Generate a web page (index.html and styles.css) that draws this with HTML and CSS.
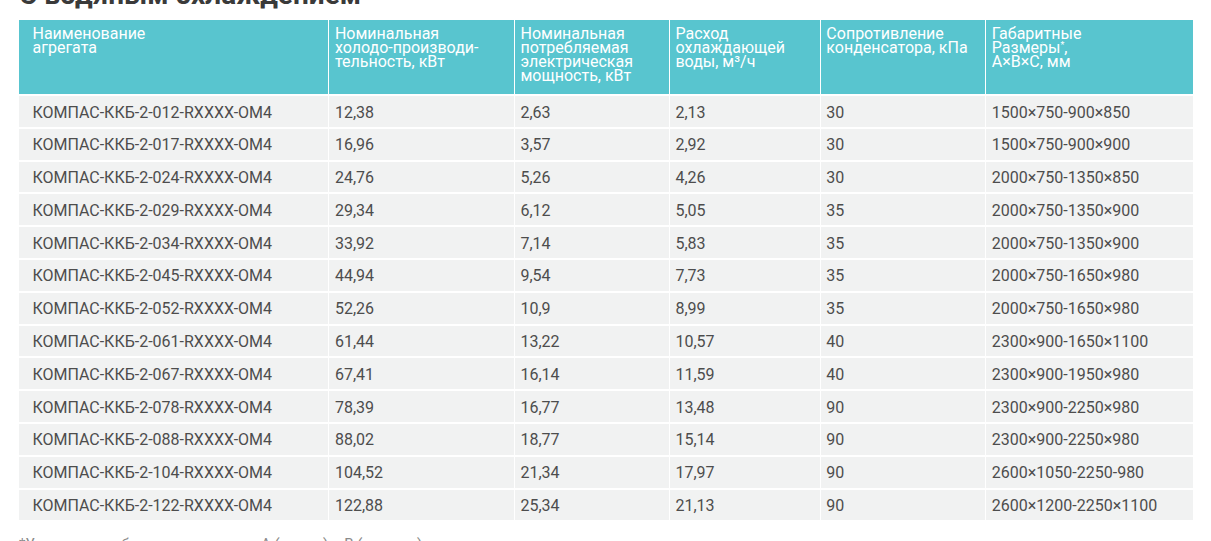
FILE: index.html
```html
<!DOCTYPE html>
<html lang="ru">
<head>
<meta charset="utf-8">
<title>С водяным охлаждением</title>
<link rel="stylesheet" href="styles.css">
</head>
<body>
<div class="page">
  <h2 class="title">С водяным охлаждением</h2>
  <table class="spec">
    <colgroup>
      <col class="c1"><col class="c2"><col class="c3"><col class="c4"><col class="c5"><col class="c6">
    </colgroup>
    <thead>
      <tr>
        <th class="first">Наименование<br>агрегата</th>
        <th>Номинальная<br>холодо-производи-<br>тельность, кВт</th>
        <th>Номинальная<br>потребляемая<br>электрическая<br>мощность, кВт</th>
        <th>Расход<br>охлаждающей<br>воды, м³/ч</th>
        <th>Сопротивление<br>конденсатора, кПа</th>
        <th>Габаритные<br>Размеры<sup>*</sup>,<br>A×B×C, мм</th>
      </tr>
    </thead>
    <tbody>
      <tr><td class="first">КОМПАС-ККБ-2-012-RXXXX-OM4</td><td>12,38</td><td>2,63</td><td>2,13</td><td>30</td><td>1500×750-900×850</td></tr>
      <tr><td class="first">КОМПАС-ККБ-2-017-RXXXX-OM4</td><td>16,96</td><td>3,57</td><td>2,92</td><td>30</td><td>1500×750-900×900</td></tr>
      <tr><td class="first">КОМПАС-ККБ-2-024-RXXXX-OM4</td><td>24,76</td><td>5,26</td><td>4,26</td><td>30</td><td>2000×750-1350×850</td></tr>
      <tr><td class="first">КОМПАС-ККБ-2-029-RXXXX-OM4</td><td>29,34</td><td>6,12</td><td>5,05</td><td>35</td><td>2000×750-1350×900</td></tr>
      <tr><td class="first">КОМПАС-ККБ-2-034-RXXXX-OM4</td><td>33,92</td><td>7,14</td><td>5,83</td><td>35</td><td>2000×750-1350×900</td></tr>
      <tr><td class="first">КОМПАС-ККБ-2-045-RXXXX-OM4</td><td>44,94</td><td>9,54</td><td>7,73</td><td>35</td><td>2000×750-1650×980</td></tr>
      <tr><td class="first">КОМПАС-ККБ-2-052-RXXXX-OM4</td><td>52,26</td><td>10,9</td><td>8,99</td><td>35</td><td>2000×750-1650×980</td></tr>
      <tr><td class="first">КОМПАС-ККБ-2-061-RXXXX-OM4</td><td>61,44</td><td>13,22</td><td>10,57</td><td>40</td><td>2300×900-1650×1100</td></tr>
      <tr><td class="first">КОМПАС-ККБ-2-067-RXXXX-OM4</td><td>67,41</td><td>16,14</td><td>11,59</td><td>40</td><td>2300×900-1950×980</td></tr>
      <tr><td class="first">КОМПАС-ККБ-2-078-RXXXX-OM4</td><td>78,39</td><td>16,77</td><td>13,48</td><td>90</td><td>2300×900-2250×980</td></tr>
      <tr><td class="first">КОМПАС-ККБ-2-088-RXXXX-OM4</td><td>88,02</td><td>18,77</td><td>15,14</td><td>90</td><td>2300×900-2250×980</td></tr>
      <tr><td class="first">КОМПАС-ККБ-2-104-RXXXX-OM4</td><td>104,52</td><td>21,34</td><td>17,97</td><td>90</td><td>2600×1050-2250-980</td></tr>
      <tr><td class="first">КОМПАС-ККБ-2-122-RXXXX-OM4</td><td>122,88</td><td>25,34</td><td>21,13</td><td>90</td><td>2600×1200-2250×1100</td></tr>
    </tbody>
  </table>
  <p class="note">*Указанные габаритные размеры А (длина) и В (ширина)</p>
</div>
</body>
</html>
```

FILE: styles.css
```css
html, body {
  margin: 0;
  padding: 0;
  background: #ffffff;
  overflow: hidden;
}

.page {
  font-family: Roboto, "Liberation Sans", Arial, sans-serif;
  color: #4a4a4a;
  padding-left: 17.5px;
}

.title {
  margin: -22px 0 0 1.5px;
  font-size: 28px;
  line-height: 34px;
  font-weight: 700;
  color: #3a3a3a;
  height: 34px;
}

.spec {
  margin-top: 6px;
  border-collapse: separate;
  border-spacing: 1.5px 2px;
  table-layout: fixed;
  width: 1176.5px;
}

.c1 { width: 309px; }
.c2 { width: 184px; }
.c3 { width: 153.5px; }
.c4 { width: 149.5px; }
.c5 { width: 164px; }
.c6 { width: 206px; }

.spec th {
  background: #58c5cf;
  color: #ffffff;
  font-weight: 400;
  font-size: 16px;
  line-height: 14px;
  text-align: left;
  vertical-align: top;
  height: 74px;
  box-sizing: border-box;
  padding: 7px 6px 0 5.5px;
}

.spec th sup {
  font-size: 9px;
  line-height: 0;
  vertical-align: 5px;
}

.spec td {
  background: #f1f2f2;
  font-size: 16px;
  line-height: 20.8px;
  padding: 6.5px 6px 3.5px 5.5px;
  vertical-align: middle;
  white-space: nowrap;
  color: #4d4d4d;
}

.spec .first {
  padding-left: 14px;
}

.note {
  margin: 13px 0 0 1.5px;
  font-size: 15px;
  line-height: 18px;
  color: #8a8a8a;
}
```
